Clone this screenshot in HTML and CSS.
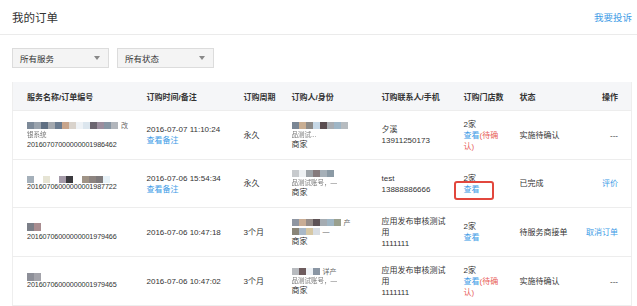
FILE: index.html
```html
<!DOCTYPE html>
<html lang="zh-CN">
<head>
    <meta charset="UTF-8">
    <title>我的订单</title>
    <link rel="stylesheet" href="styles.css">
</head>
<body>
    <div class="page-head">
        <h1 class="page-title">我的订单</h1>
        <a class="complain" href="#">我要投诉</a>
    </div>

    <div class="content">
        <div class="filters">
            <div class="select">所有服务<span class="caret"></span></div>
            <div class="select">所有状态<span class="caret"></span></div>
        </div>

        <table class="orders">
            <colgroup>
                <col style="width:134px">
                <col style="width:97px">
                <col style="width:48px">
                <col style="width:90px">
                <col style="width:82px">
                <col style="width:56px">
                <col style="width:62px">
                <col>
            </colgroup>
            <thead>
                <tr>
                    <th>服务名称/订单编号</th>
                    <th>订购时间/备注</th>
                    <th>订购周期</th>
                    <th>订购人/身份</th>
                    <th>订购联系人/手机</th>
                    <th>订购门店数</th>
                    <th>状态</th>
                    <th class="ops">操作</th>
                </tr>
            </thead>
            <tbody>
                <tr class="r1">
                    <td>
                        <div class="blur">
                            <i style="background:#7d8a99"></i><i style="background:#9aa3ad"></i><i style="background:#5f6f82"></i><i style="background:#a3a8ae"></i><i style="background:#6b7c90"></i><i style="background:#c8a58c"></i><i style="background:#d9d3cc"></i><i style="background:#eef2f6"></i><i style="background:#dce6ee"></i><i style="background:#6c6670"></i><i style="background:#9c8e9e"></i><i style="background:#8896a4"></i><i style="background:#b2b6bc"></i><span class="cn">改</span>
                        </div>
                        <div class="faded">银系统</div>
                        <div class="num">20160707000000001986462</div>
                    </td>
                    <td>2016-07-07 11:10:24<br><a href="#">查看备注</a></td>
                    <td>永久</td>
                    <td>
                        <div class="blur">
                            <i style="background:#7a8694"></i><i style="background:#c9ae92"></i><i style="background:#8d8b88"></i><i style="background:#c6d8e6"></i><i style="background:#5a4c4f"></i><i style="background:#a9adb2"></i><i style="background:#9fb6c6"></i><i style="background:#b7bcc0"></i>
                        </div>
                        <div class="faded">品测试...</div>
                        <div>商家</div>
                    </td>
                    <td>夕溪<br>13911250173</td>
                    <td>2家<br><a href="#">查看</a><span class="warn">(待确<br>认)</span></td>
                    <td>实施待确认</td>
                    <td class="ops">---</td>
                </tr>
                <tr class="r2">
                    <td>
                        <div class="blur">
                            <i style="background:#a5b0ba"></i><i class="gap"></i><i style="background:#e6e4d4"></i><i class="gap"></i><i style="background:#a49aa8"></i><i style="background:#3b3a3e"></i><i class="gap"></i><i style="background:#a09486"></i><i style="background:#8d8480"></i><i style="background:#7f7a7b"></i><i style="background:#e8f2f8"></i>
                        </div>
                        <div class="num cut">20160706000000001987722</div>
                    </td>
                    <td>2016-07-06 15:54:34<br><a href="#">查看备注</a></td>
                    <td>永久</td>
                    <td>
                        <div class="blur">
                            <i style="background:#c7cacd"></i><i style="background:#eef1f3"></i><i style="background:#9da3a8"></i><i style="background:#857a7c"></i><i style="background:#a6b0b8"></i><i style="background:#8b9aa5"></i>
                        </div>
                        <div class="faded">品测试账号，—</div>
                        <div>商家</div>
                    </td>
                    <td>test<br>13888886666</td>
                    <td>2家<br><a class="marked" href="#">查看</a></td>
                    <td>已完成</td>
                    <td class="ops"><a href="#">评价</a></td>
                </tr>
                <tr class="r3">
                    <td>
                        <div class="blur small">
                            <i style="background:#7b7f88"></i><i style="background:#a98d90"></i>
                        </div>
                        <div class="num">20160706000000001979466</div>
                    </td>
                    <td>2016-07-06 10:47:18</td>
                    <td>3个月</td>
                    <td>
                        <div class="blur">
                            <i style="background:#8f96a2"></i><i style="background:#c9ad95"></i><i style="background:#958c88"></i><i style="background:#5e5356"></i><i style="background:#a5acb2"></i><i style="background:#9fb5c3"></i><i style="background:#9aa08e"></i><span class="cn">产</span>
                        </div>
                        <div class="blur">
                            <i style="background:#8a8578"></i><i style="background:#a9b8c7"></i><i style="background:#d6c7a4"></i><i style="background:#d8dde3"></i><span class="cn">—</span>
                        </div>
                        <div>商家</div>
                    </td>
                    <td>应用发布审核测试<br>用<br>1111111</td>
                    <td>2家<br><a href="#">查看</a></td>
                    <td>待服务商接单</td>
                    <td class="ops"><a href="#">取消订单</a></td>
                </tr>
                <tr class="r4">
                    <td>
                        <div class="blur small">
                            <i style="background:#8d8f98"></i><i style="background:#a3a3aa"></i>
                        </div>
                        <div class="num cut">20160706000000001979465</div>
                    </td>
                    <td>2016-07-06 10:47:02</td>
                    <td>3个月</td>
                    <td>
                        <div class="blur">
                            <i style="background:#b8bbbf"></i><i style="background:#6d5b5d"></i><i style="background:#eef2f6"></i><i style="background:#8a96a4"></i><span class="cn">详产</span>
                        </div>
                        <div class="faded">品测试账号，—</div>
                        <div>商家</div>
                    </td>
                    <td>应用发布审核测试<br>用<br>1111111</td>
                    <td>2家<br><a href="#">查看</a><span class="warn">(待确<br>认)</span></td>
                    <td>实施待确认</td>
                    <td class="ops">---</td>
                </tr>
            </tbody>
        </table>
    </div>
</body>
</html>
```

FILE: styles.css
```css
body {
    margin: 0;
    font-family: "Liberation Sans", "Noto Sans CJK SC", sans-serif;
    font-size: 8px;
    color: #333;
    background-color: #fff;
    overflow: hidden;
}
a {
    color: #3d9be6;
    text-decoration: none;
}
.page-head {
    display: flex;
    justify-content: space-between;
    align-items: center;
    height: 34px;
    padding: 0 5px 0 12px;
    border-bottom: 1px solid #ebebeb;
}
.page-title {
    margin: 0;
    font-size: 11.5px;
    font-weight: normal;
    color: #333;
}
.complain {
    font-size: 9.5px;
}
.content {
    padding: 13px 5px 0 12px;
}
.filters {
    display: flex;
    gap: 8px;
    margin-bottom: 14px;
}
.select {
    display: flex;
    align-items: center;
    justify-content: space-between;
    width: 97px;
    height: 20px;
    box-sizing: border-box;
    padding: 0 8px 0 7px;
    background-color: #f4f4f4;
    border: 1px solid #dcdcdc;
    font-size: 8.5px;
}
.caret {
    width: 0;
    height: 0;
    border-left: 3.5px solid transparent;
    border-right: 3.5px solid transparent;
    border-top: 4px solid #888;
}
.orders {
    width: 620px;
    table-layout: fixed;
    border-collapse: collapse;
    border: 1px solid #eeeeee;
    border-top: none;
}
.orders th {
    height: 28px;
    padding: 0;
    text-align: left;
    font-weight: bold;
    background-color: #f5f6f8;
    color: #333;
}
.orders td {
    padding: 0;
    vertical-align: middle;
    line-height: 11px;
    border-top: 1px solid #ededed;
}
.orders th:first-child,
.orders td:first-child {
    padding-left: 14px;
}
.orders .ops {
    text-align: right;
    padding-right: 13px;
}
.r1 td { height: 48px; }
.r2 td { height: 47px; }
.r3 td { height: 48px; }
.r4 td { height: 48px; }
.warn {
    color: #e8625a;
}
.num {
    font-size: 7.2px;
    letter-spacing: -0.1px;
}
.num.cut {
    margin-top: -3px;
}
.faded {
    color: #777;
    font-size: 6.5px;
    line-height: 9px;
    filter: blur(0.4px);
}
.blur {
    display: flex;
    align-items: center;
    height: 9px;
}
.blur i {
    display: block;
    width: 7px;
    height: 7px;
    filter: blur(0.3px);
}
.blur i.gap {
    width: 9px;
}
.blur.small i {
    height: 8px;
}
.blur .cn {
    margin-left: 3px;
    font-size: 7px;
    color: #666;
}
.marked {
    position: relative;
}
.marked::after {
    content: "";
    position: absolute;
    left: -10px;
    right: -14px;
    top: -4px;
    bottom: -6px;
    border: 2px solid #e2473d;
    border-radius: 3px;
}
```
